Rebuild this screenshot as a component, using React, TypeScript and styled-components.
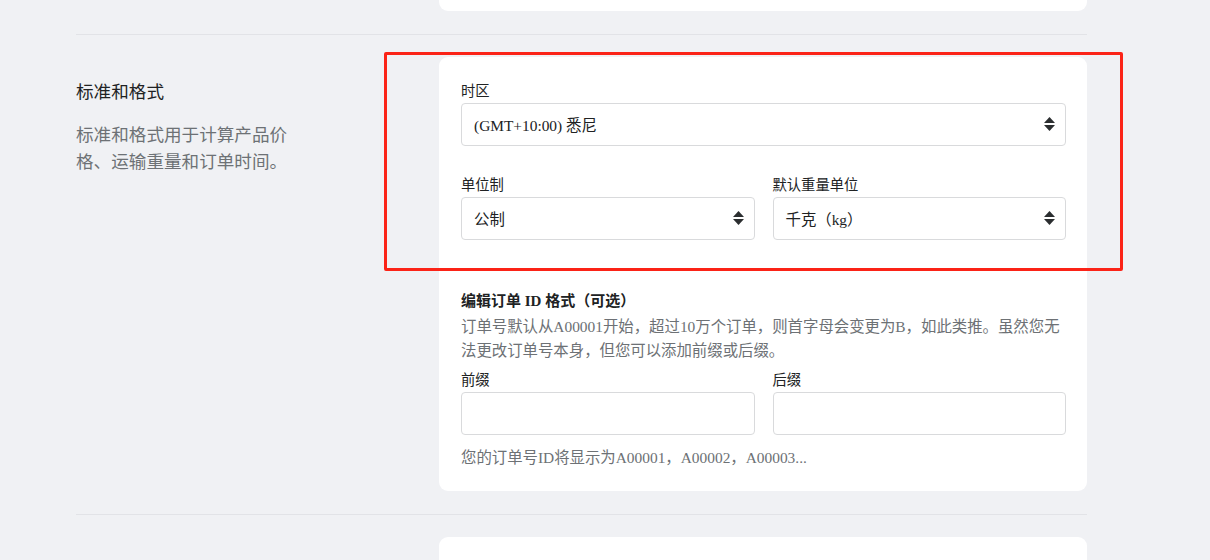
import React from 'react';
import styled, { createGlobalStyle } from 'styled-components';

const GlobalStyle = createGlobalStyle`
  html, body {
    margin: 0;
    padding: 0;
    background: #f0f1f4;
  }
  body {
    font-family: "Liberation Serif", "Noto Sans CJK SC", serif;
    color: #202223;
  }
  * {
    box-sizing: border-box;
  }
`;

function UpDownIcon() {
  return (
    <svg width="11" height="14" viewBox="0 0 11 14" fill="#2b2e30">
      <path d="M5.5 0L11 6H0Z" />
      <path d="M0 8H11L5.5 14Z" />
    </svg>
  );
}

export default function App() {
  return (
    <Page>
      <GlobalStyle />
      <Content>
        <StubCard $edge="bottom" />
        <Divider />

        <Section>
          <Aside>
            <AsideTitle>标准和格式</AsideTitle>
            <AsideText>标准和格式用于计算产品价格、运输重量和订单时间。</AsideText>
          </Aside>

          <Card>
            <Field>
              <Label>时区</Label>
              <SelectBox>
                <span>(GMT+10:00) 悉尼</span>
                <UpDownIcon />
              </SelectBox>
            </Field>

            <TwoCols $top={29}>
              <Field>
                <Label>单位制</Label>
                <SelectBox>
                  <span>公制</span>
                  <UpDownIcon />
                </SelectBox>
              </Field>
              <Field>
                <Label>默认重量单位</Label>
                <SelectBox>
                  <span>千克（kg）</span>
                  <UpDownIcon />
                </SelectBox>
              </Field>
            </TwoCols>

            <SubTitle>编辑订单 ID 格式（可选）</SubTitle>
            <Note>
              订单号默认从A00001开始，超过10万个订单，则首字母会变更为B，如此类推。虽然您无法更改订单号本身，但您可以添加前缀或后缀。
            </Note>

            <TwoCols $top={7}>
              <Field>
                <Label>前缀</Label>
                <TextInput />
              </Field>
              <Field>
                <Label>后缀</Label>
                <TextInput />
              </Field>
            </TwoCols>

            <Hint>您的订单号ID将显示为A00001，A00002，A00003...</Hint>
          </Card>
        </Section>

        <Divider />
        <StubCard $edge="top" />
      </Content>

      <Highlight />
    </Page>
  );
}

const Page = styled.div`
  position: relative;
  width: 1210px;
  height: 560px;
  padding-left: 76px;
  overflow: hidden;
`;

const Content = styled.div`
  width: 1011px;
`;

const Section = styled.section`
  display: grid;
  grid-template-columns: 363px 648px;
  align-items: start;
`;

const StubCard = styled.div<{ $edge: 'top' | 'bottom' }>`
  margin-left: 363px;
  width: 648px;
  height: ${(p) => (p.$edge === 'bottom' ? '11px' : '40px')};
  background: #fff;
  border-radius: ${(p) => (p.$edge === 'bottom' ? '0 0 9px 9px' : '9px 9px 0 0')};
`;

const Divider = styled.hr`
  border: none;
  height: 1px;
  background: #e2e3e7;
  margin: 23px 0 22px;
`;

const Aside = styled.div`
  padding-top: 21px;
  font-family: "Noto Sans CJK SC", sans-serif;
`;

const AsideTitle = styled.h2`
  margin: 0;
  font-size: 17.6px;
  line-height: 26px;
  font-weight: 400;
  color: #202223;
`;

const AsideText = styled.p`
  margin: 16px 0 0;
  max-width: 222px;
  font-size: 17.6px;
  line-height: 27px;
  color: #6d7175;
`;

const Card = styled.div`
  background: #fff;
  border-radius: 9px;
  padding: 24px 21px 21px 22px;
`;

const Field = styled.div`
  display: flex;
  flex-direction: column;
`;

const Label = styled.label`
  font-size: 14.3px;
  line-height: 20px;
  margin-bottom: 2px;
  color: #202223;
`;

const SelectBox = styled.div`
  display: flex;
  align-items: center;
  justify-content: space-between;
  height: 43px;
  padding: 0 10px 1px 12px;
  border: 1px solid #d9dadc;
  border-radius: 4px;
  font-size: 15.4px;
  color: #202223;
  background: #fff;
`;

const TextInput = styled.input`
  height: 43px;
  border: 1px solid #d9dadc;
  border-radius: 4px;
  background: #fff;
  font: inherit;
  padding: 0 12px;
  outline: none;
`;

const TwoCols = styled.div<{ $top: number }>`
  display: grid;
  grid-template-columns: 1fr 1fr;
  gap: 18px;
  margin-top: ${(p) => p.$top}px;
`;

const SubTitle = styled.h3`
  margin: 51px 0 0;
  font-size: 15px;
  line-height: 20px;
  font-weight: 700;
  color: #202223;
`;

const Note = styled.p`
  margin: 4px 0 0;
  font-size: 15.4px;
  line-height: 24px;
  color: #6d7175;
`;

const Hint = styled.p`
  margin: 11px 0 0;
  font-size: 15.4px;
  line-height: 24px;
  color: #6d7175;
`;

const Highlight = styled.div`
  position: absolute;
  left: 384px;
  top: 52px;
  width: 739px;
  height: 219px;
  border: 3px solid #fb2317;
  border-radius: 2px;
  pointer-events: none;
`;
